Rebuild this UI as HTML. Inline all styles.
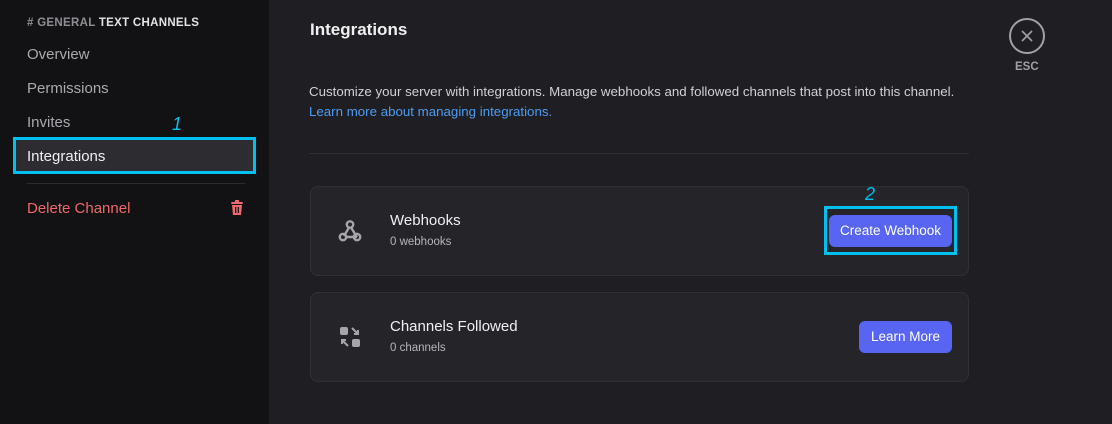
<!DOCTYPE html>
<html><head><meta charset="utf-8"><style>
*{margin:0;padding:0;box-sizing:border-box}
body{width:1112px;height:424px;overflow:hidden;background:#1f1f23;font-family:"Liberation Sans",sans-serif;position:relative}
.side{position:absolute;left:0;top:0;width:269px;height:424px;background:#121214}
.abs{position:absolute;white-space:nowrap}
.nav{font-size:15px;color:#a9a9b0}
.card{position:absolute;left:310px;width:659px;height:90px;background:#242429;border:1px solid #303036;border-radius:8px}
.btn{position:absolute;background:#5865f2;color:#fff;font-size:13.5px;border-radius:6px;text-align:center}
</style></head><body>
<div class="side">
<div class="abs" style="left:27px;top:17px;font-size:11.5px;font-weight:bold;color:#8e8e95;letter-spacing:.3px">#&nbsp;GENERAL <span style="color:#e4e4e8">TEXT CHANNELS</span></div>
<div class="abs nav" style="left:27px;top:46px">Overview</div>
<div class="abs nav" style="left:27px;top:80px">Permissions</div>
<div class="abs nav" style="left:27px;top:114px">Invites</div>
<div class="abs" style="left:172px;top:114px;font-size:18px;font-style:italic;color:#00c0f0">1</div>
<div class="abs" style="left:13px;top:137px;width:243px;height:37px;border:3px solid #00c0f0;background:#2c2c31"></div>
<div class="abs" style="left:27px;top:148px;font-size:15px;color:#f0f0f3">Integrations</div>
<div class="abs" style="left:27px;top:183px;width:218px;height:1px;background:#2a2a2f"></div>
<div class="abs" style="left:27px;top:200px;font-size:15px;color:#f0686b">Delete Channel</div>
<svg class="abs" style="left:230px;top:200px" width="14" height="16" viewBox="0 0 14 16"><rect x="1" y="2" width="12" height="2" rx="1" fill="#f0686b"/><rect x="5" y="0" width="4" height="3" fill="#f0686b"/><path d="M2 5h10l-1 10H3z" fill="#f0686b"/><rect x="5" y="7" width="1.3" height="6" fill="#121214"/><rect x="7.7" y="7" width="1.3" height="6" fill="#121214"/></svg>
</div>
<div class="abs" style="left:310px;top:20px;font-size:17px;font-weight:bold;color:#f0f0f3">Integrations</div>
<div class="abs" style="left:309px;top:84px;font-size:13.3px;color:#d0d0d5">Customize your server with integrations. Manage webhooks and followed channels that post into this channel.</div>
<div class="abs" style="left:309px;top:104px;font-size:13.3px;color:#4d9cf0">Learn more about managing integrations.</div>
<div class="abs" style="left:309px;top:153px;width:660px;height:1px;background:#2e2e33"></div>
<svg class="abs" style="left:1009px;top:18px" width="36" height="36" viewBox="0 0 36 36" fill="none" stroke="#a0a0a6" stroke-width="2"><circle cx="18" cy="18" r="17"/><path d="M13 13l10 10M23 13l-10 10" stroke-width="1.6"/></svg>
<div class="abs" style="left:1015px;top:61px;font-size:11.5px;font-weight:bold;color:#a0a0a6">ESC</div>
<div class="card" style="top:186px"></div>
<svg class="abs" style="left:338px;top:219px" width="24" height="24" viewBox="0 0 24 24" fill="none" stroke="#a5a5ab" stroke-width="2.4"><circle cx="12" cy="5.5" r="3.2"/><circle cx="5" cy="18" r="3.2"/><circle cx="19" cy="18" r="3.2"/><path d="M11 8.5l-5 8.5M8.5 18h10.5M13 8.5l6 9.5"/></svg>
<div class="abs" style="left:390px;top:212px;font-size:15px;color:#f0f0f3">Webhooks</div>
<div class="abs" style="left:390px;top:236px;font-size:11.5px;color:#b5b5bb">0 webhooks</div>
<div class="abs" style="left:865px;top:184px;font-size:18px;font-style:italic;color:#00c0f0">2</div>
<div class="abs" style="left:824px;top:206px;width:133px;height:49px;border:3px solid #00c0f0"></div>
<div class="btn" style="left:829px;top:215px;width:123px;height:32px;line-height:32px">Create Webhook</div>
<div class="card" style="top:292px"></div>
<svg class="abs" style="left:340px;top:327px" width="20" height="20" viewBox="0 0 20 20" fill="#a5a5ab"><rect x="0" y="0" width="8" height="8" rx="2"/><rect x="12" y="12" width="8" height="8" rx="2"/><path d="M12 1l6 6M18 3v4h-4" stroke="#a5a5ab" stroke-width="2" fill="none"/><path d="M8 19L2 13M2 17v-4h4" stroke="#a5a5ab" stroke-width="2" fill="none"/></svg>
<div class="abs" style="left:390px;top:318px;font-size:15px;color:#f0f0f3">Channels Followed</div>
<div class="abs" style="left:390px;top:342px;font-size:11.5px;color:#b5b5bb">0 channels</div>
<div class="btn" style="left:859px;top:321px;width:93px;height:32px;line-height:32px">Learn More</div>
</body></html>
